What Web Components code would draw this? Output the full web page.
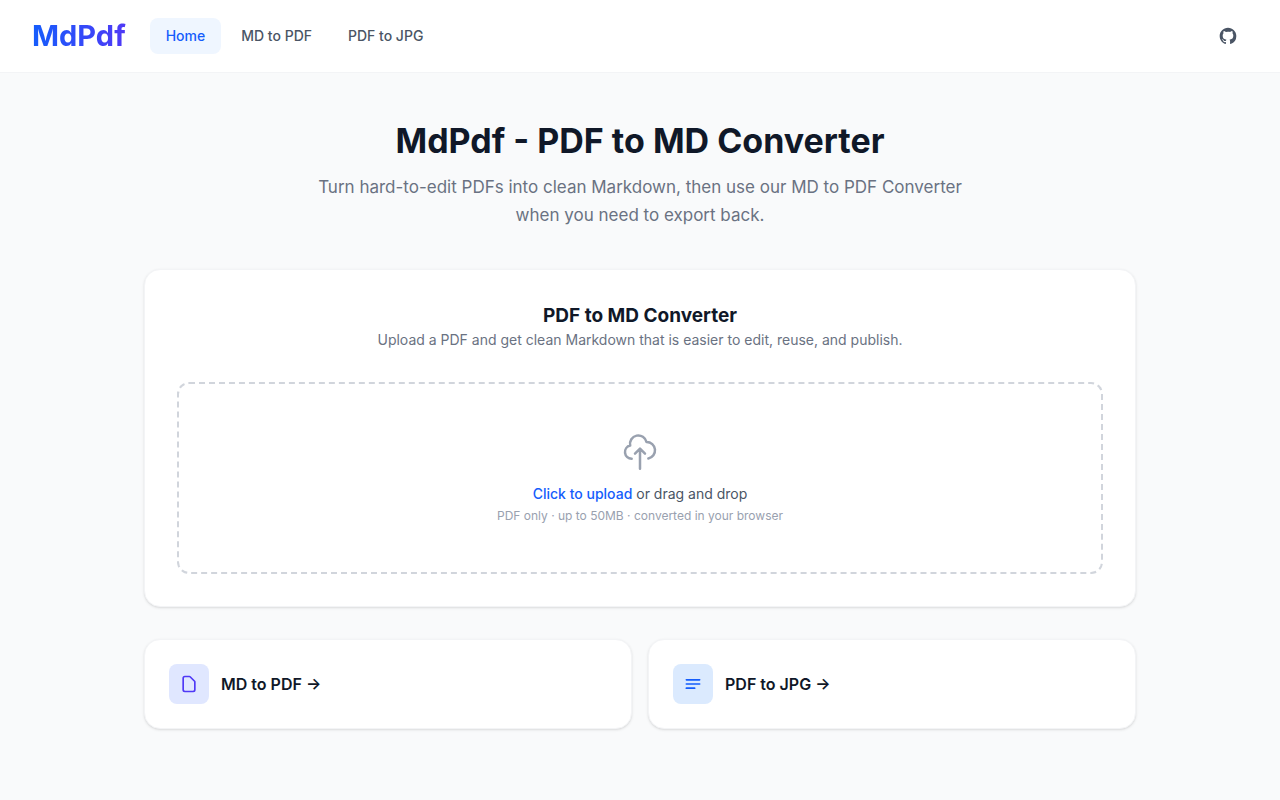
<!DOCTYPE html>
<html lang="en">
<head>
<meta charset="utf-8">
<meta name="viewport" content="width=device-width, initial-scale=1">
<title>MdPdf - PDF to MD Converter</title>
<style>
  :root {
    --ink: #101828;
    --text: #4a5565;
    --muted: #6a7282;
    --faint: #99a1af;
    --line: #f3f4f6;
    --dash: #d1d5dc;
    --blue: #155dfc;
    --indigo: #4f39f6;
    --card-shadow: 0 1px 3px rgba(0, 0, 0, .1), 0 1px 2px -1px rgba(0, 0, 0, .1);
  }
  body {
    margin: 0;
    min-height: 100vh;
    background: #f9fafb;
    color: var(--ink);
    font-family: Inter, "Liberation Sans", sans-serif;
    font-size: 14px;
    line-height: 20px;
  }
</style>
</head>
<body>
<md-app></md-app>

<template id="app">
  <style>
    :host { display: block; }
    main { box-sizing: border-box; max-width: 1024px; margin: 0 auto; padding: 48px 16px; }
    .links { display: grid; grid-template-columns: repeat(auto-fit, minmax(280px, 1fr)); gap: 16px; margin-top: 32px; }
  </style>
  <site-header>
    <nav-link href="#home" current>Home</nav-link>
    <nav-link href="#md-to-pdf">MD to PDF</nav-link>
    <nav-link href="#pdf-to-jpg">PDF to JPG</nav-link>
  </site-header>
  <main>
    <page-hero>
      <span slot="title">MdPdf - PDF to MD Converter</span>
      Turn hard-to-edit PDFs into clean Markdown, then use our MD to PDF Converter when you need to export back.
    </page-hero>
    <converter-card>
      <span slot="title">PDF to MD Converter</span>
      <span slot="description">Upload a PDF and get clean Markdown that is easier to edit, reuse, and publish.</span>
      <drop-zone></drop-zone>
    </converter-card>
    <div class="links">
      <tool-link href="#md-to-pdf" tone="indigo">
        <svg slot="icon" width="20" height="20" viewBox="0 0 24 24" fill="none" stroke="currentColor" stroke-width="2" stroke-linecap="round" stroke-linejoin="round" aria-hidden="true"><path d="M7 21h10a2 2 0 002-2V9.414a1 1 0 00-.293-.707l-5.414-5.414A1 1 0 0012.586 3H7a2 2 0 00-2 2v14a2 2 0 002 2z"/></svg>
        MD to PDF →
      </tool-link>
      <tool-link href="#pdf-to-jpg" tone="blue">
        <svg slot="icon" width="20" height="20" viewBox="0 0 24 24" fill="none" stroke="currentColor" stroke-width="2" stroke-linecap="round" stroke-linejoin="round" aria-hidden="true"><path d="M4 7h16M4 12h16M4 17h10"/></svg>
        PDF to JPG →
      </tool-link>
    </div>
  </main>
</template>

<template id="header">
  <style>
    :host { display: block; background: #fff; border-bottom: 1px solid var(--line); }
    header { display: flex; align-items: center; gap: 24px; min-height: 72px; padding: 0 32px; }
    .logo {
      font-size: 29px; line-height: 36px; font-weight: 700; text-decoration: none;
      color: transparent; background: linear-gradient(to right, var(--blue), var(--indigo));
      -webkit-background-clip: text; background-clip: text;
    }
    nav { display: flex; gap: 4px; flex: 1; }
    .github { display: flex; padding: 10px; color: var(--text); }
  </style>
  <header>
    <a class="logo" href="#home">MdPdf</a>
    <nav aria-label="Main"><slot></slot></nav>
    <a class="github" href="#github" aria-label="GitHub">
      <svg width="20" height="20" viewBox="0 0 24 24" fill="currentColor" aria-hidden="true"><path fill-rule="evenodd" clip-rule="evenodd" d="M12 2C6.477 2 2 6.484 2 12.017c0 4.425 2.865 8.18 6.839 9.504.5.092.682-.217.682-.483 0-.237-.008-.868-.013-1.703-2.782.605-3.369-1.343-3.369-1.343-.454-1.158-1.11-1.466-1.11-1.466-.908-.62.069-.608.069-.608 1.003.07 1.531 1.032 1.531 1.032.892 1.53 2.341 1.088 2.91.832.092-.647.35-1.088.636-1.338-2.22-.253-4.555-1.113-4.555-4.951 0-1.093.39-1.988 1.029-2.688-.103-.253-.446-1.272.098-2.65 0 0 .84-.27 2.75 1.026A9.564 9.564 0 0112 6.844c.85.004 1.705.115 2.504.337 1.909-1.296 2.747-1.027 2.747-1.027.546 1.379.202 2.398.1 2.651.64.7 1.028 1.595 1.028 2.688 0 3.848-2.339 4.695-4.566 4.943.359.309.678.92.678 1.855 0 1.338-.012 2.419-.012 2.747 0 .268.18.58.688.482A10.019 10.019 0 0022 12.017C22 6.484 17.522 2 12 2z"/></svg>
    </a>
  </header>
</template>

<template id="nav-link">
  <style>
    :host { display: block; }
    a { display: block; padding: 8px 16px; border-radius: 8px; color: var(--text); font-weight: 500; text-decoration: none; white-space: nowrap; }
    :host([current]) a { color: var(--blue); background: #eff6ff; }
  </style>
  <a><slot></slot></a>
</template>

<template id="hero">
  <style>
    :host { display: block; text-align: center; margin-bottom: 40px; }
    h1 { margin: 0 0 12px; font-size: 34px; line-height: 40px; font-weight: 700; }
    p { max-width: 672px; margin: 0 auto; font-size: 17px; line-height: 28px; color: var(--muted); }
  </style>
  <h1><slot name="title"></slot></h1>
  <p><slot></slot></p>
</template>

<template id="card">
  <style>
    :host { display: block; padding: 32px; background: #fff; border: 1px solid var(--line); border-radius: 16px; box-shadow: var(--card-shadow); }
    h2 { margin: 0; font-size: 19px; line-height: 28px; font-weight: 700; text-align: center; }
    p { margin: 0 0 32px; color: var(--muted); text-align: center; }
  </style>
  <h2><slot name="title"></slot></h2>
  <p><slot name="description"></slot></p>
  <slot></slot>
</template>

<template id="drop">
  <style>
    :host { display: block; }
    label { display: flex; flex-direction: column; align-items: center; position: relative; padding: 48px; border: 2px dashed var(--dash); border-radius: 12px; text-align: center; color: var(--text); cursor: pointer; }
    input { position: absolute; inset: 0; width: 100%; height: 100%; opacity: 0; cursor: pointer; }
    svg { color: var(--faint); margin-bottom: 12px; }
    strong { color: var(--blue); font-weight: 500; }
    small { margin-top: 4px; font-size: 12px; line-height: 16px; color: var(--faint); }
  </style>
  <label>
    <svg width="40" height="40" viewBox="0 0 24 24" fill="none" stroke="currentColor" stroke-width="1.5" stroke-linecap="round" stroke-linejoin="round" aria-hidden="true"><path d="M7 16a4 4 0 01-.88-7.903A5 5 0 1115.9 6L16 6a5 5 0 011 9.9M15 13l-3-3m0 0l-3 3m3-3v12"/></svg>
    <span><strong>Click to upload</strong> or drag and drop</span>
    <small>PDF only · up to 50MB · converted in your browser</small>
    <input type="file" accept="application/pdf">
  </label>
</template>

<template id="tool">
  <style>
    :host { display: block; --tile: #dbeafe; --mark: var(--blue); }
    :host([tone="indigo"]) { --tile: #e0e7ff; --mark: var(--indigo); }
    a { display: flex; align-items: center; gap: 12px; padding: 24px; background: #fff; border: 1px solid var(--line); border-radius: 16px; box-shadow: var(--card-shadow); color: var(--ink); font-size: 16px; line-height: 24px; font-weight: 600; text-decoration: none; }
    .tile { display: grid; place-items: center; width: 40px; height: 40px; border-radius: 8px; background: var(--tile); color: var(--mark); }
  </style>
  <a><span class="tile"><slot name="icon"></slot></span><span><slot></slot></span></a>
</template>

<script>
  class TemplateElement extends HTMLElement {
    constructor() {
      super();
      const template = document.getElementById(this.constructor.template);
      this.attachShadow({ mode: "open" }).append(template.content.cloneNode(true));
    }
  }
  class LinkElement extends TemplateElement {
    connectedCallback() {
      const link = this.shadowRoot.querySelector("a");
      link.setAttribute("href", this.getAttribute("href"));
      if (this.hasAttribute("current")) link.setAttribute("aria-current", "page");
    }
  }
  customElements.define("site-header", class SiteHeader extends TemplateElement { static template = "header"; });
  customElements.define("nav-link", class NavLink extends LinkElement { static template = "nav-link"; });
  customElements.define("page-hero", class PageHero extends TemplateElement { static template = "hero"; });
  customElements.define("converter-card", class ConverterCard extends TemplateElement { static template = "card"; });
  customElements.define("drop-zone", class DropZone extends TemplateElement { static template = "drop"; });
  customElements.define("tool-link", class ToolLink extends LinkElement { static template = "tool"; });
  customElements.define("md-app", class MdApp extends TemplateElement { static template = "app"; });
</script>
</body>
</html>
